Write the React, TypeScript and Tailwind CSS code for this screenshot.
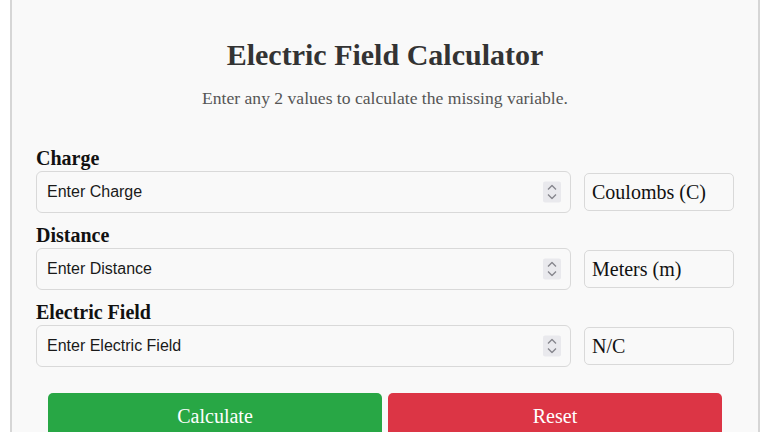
import type { ReactNode } from 'react'

interface Field {
  label: string
  placeholder: string
  unit: string
}

const fields: Field[] = [
  { label: 'Charge', placeholder: 'Enter Charge', unit: 'Coulombs (C)' },
  { label: 'Distance', placeholder: 'Enter Distance', unit: 'Meters (m)' },
  { label: 'Electric Field', placeholder: 'Enter Electric Field', unit: 'N/C' },
]

function Spinner() {
  return (
    <div className="absolute right-[10px] top-1/2 -translate-y-1/2 w-[18px] h-[21px] bg-[#e9e9ed] rounded-[2px] flex flex-col items-center justify-center gap-[3px]">
      <svg width="10" height="6" viewBox="0 0 10 6" fill="none">
        <path d="M1 5L5 1L9 5" stroke="#85858c" strokeWidth="1.3" />
      </svg>
      <svg width="10" height="6" viewBox="0 0 10 6" fill="none">
        <path d="M1 1L5 5L9 1" stroke="#85858c" strokeWidth="1.3" />
      </svg>
    </div>
  )
}

function Row({ field }: { field: Field }) {
  return (
    <div className="mb-[11px]">
      <label className="block text-[20px] leading-[22px] font-bold text-[#111] mb-[2px]">{field.label}</label>
      <div className="flex items-center gap-[13px]">
        <div className="relative flex-1">
          <input
            type="text"
            placeholder={field.placeholder}
            className="w-full h-[42px] pl-[10px] pr-[40px] border border-[#d9d9d9] rounded-[6px] bg-[#f9f9f9] text-[16px] text-[#222] placeholder:text-[#1a1a1a] outline-none"
            style={{ fontFamily: '"Liberation Sans", Arial, sans-serif' }}
          />
          <Spinner />
        </div>
        <div className="w-[150px] h-[38px] px-[7px] flex items-center border border-[#d9d9d9] rounded-[5px] bg-[#f9f9f9] text-[20px] text-[#111]">
          {field.unit}
        </div>
      </div>
    </div>
  )
}

function Button({ color, children }: { color: string; children: ReactNode }) {
  return (
    <button className={`w-[334px] pt-[12px] pb-[14px] rounded-[5px] text-white text-[20px] leading-[22px] ${color}`}>
      {children}
    </button>
  )
}

export default function App() {
  return (
    <div className="w-[768px] h-[432px] overflow-hidden bg-white" style={{ fontFamily: '"Liberation Serif", "Times New Roman", serif' }}>
      <div className="ml-[10px] w-[750px] min-h-[480px] border-2 border-t-0 border-[#d6d6d6] bg-[#f9f9f9] px-[24px] pt-[38px]">
        <h1 className="text-center text-[30px] leading-[34px] font-bold text-[#333]">Electric Field Calculator</h1>
        <p className="text-center text-[17.6px] leading-[20px] text-[#555] mt-[16px]">
          Enter any 2 values to calculate the missing variable.
        </p>
        <div className="mt-[39px]">
          {fields.map((f) => (
            <Row key={f.label} field={f} />
          ))}
        </div>
        <div className="flex justify-center gap-[6px] mt-[26px]">
          <Button color="bg-[#28a745]">Calculate</Button>
          <Button color="bg-[#dc3545]">Reset</Button>
        </div>
      </div>
    </div>
  )
}
